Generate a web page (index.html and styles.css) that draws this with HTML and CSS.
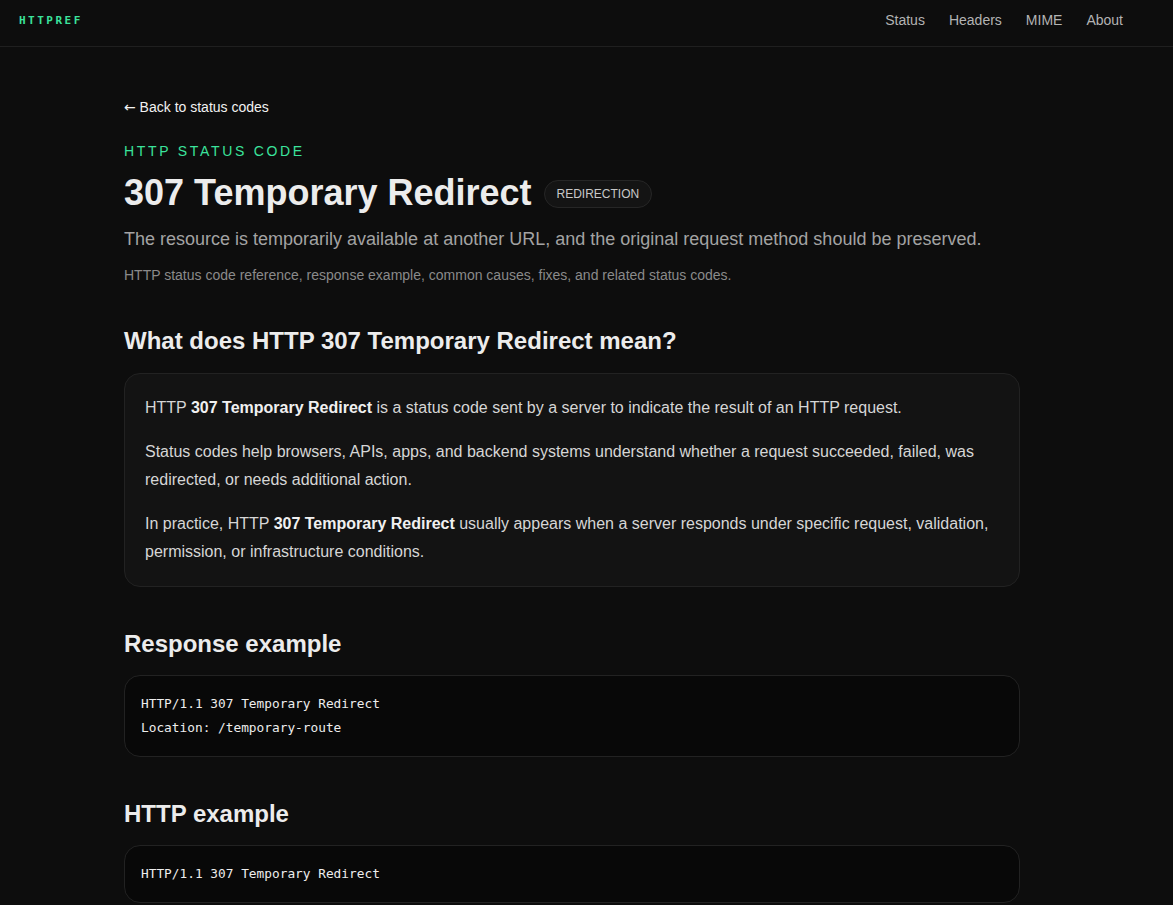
FILE: index.html
```html
<!DOCTYPE html>
<html lang="en">
<head>
<meta charset="utf-8">
<title>307 Temporary Redirect</title>
<link rel="stylesheet" href="styles.css">
</head>
<body>
<header class="topbar">
  <a class="logo" href="#">HTTPREF</a>
  <nav class="nav">
    <a href="#">Status</a>
    <a href="#">Headers</a>
    <a href="#">MIME</a>
    <a href="#">About</a>
  </nav>
</header>
<main class="main">
  <a class="back" href="#"><span class="arrow">←</span> Back to status codes</a>
  <div class="eyebrow">HTTP STATUS CODE</div>
  <div class="title-row">
    <h1 class="title">307 Temporary Redirect</h1>
    <span class="badge">REDIRECTION</span>
  </div>
  <p class="lead">The resource is temporarily available at another URL, and the original request method should be preserved.</p>
  <p class="meta">HTTP status code reference, response example, common causes, fixes, and related status codes.</p>

  <h2 class="section-title first">What does HTTP 307 Temporary Redirect mean?</h2>
  <div class="card">
    <p>HTTP <strong>307 Temporary Redirect</strong> is a status code sent by a server to indicate the result of an HTTP request.</p>
    <p>Status codes help browsers, APIs, apps, and backend systems understand whether a request succeeded, failed, was redirected, or needs additional action.</p>
    <p>In practice, HTTP <strong>307 Temporary Redirect</strong> usually appears when a server responds under specific request, validation, permission, or infrastructure conditions.</p>
  </div>

  <h2 class="section-title">Response example</h2>
  <pre class="code">HTTP/1.1 307 Temporary Redirect
Location: /temporary-route</pre>

  <h2 class="section-title">HTTP example</h2>
  <pre class="code">HTTP/1.1 307 Temporary Redirect</pre>
</main>
</body>
</html>
```
FILE: styles.css
```css
* { box-sizing: border-box; }
html, body { margin: 0; padding: 0; }
body {
  background: #0d0d0d;
  color: #e8e8e8;
  font-family: "Liberation Sans", Arial, sans-serif;
}
a { text-decoration: none; color: inherit; }

.topbar {
  height: 47px;
  border-bottom: 1px solid #1f1f1f;
  display: flex;
  align-items: center;
  justify-content: space-between;
  padding: 0 50px 0 19px;
}
.logo {
  font-family: "DejaVu Sans Mono", monospace;
  font-weight: bold;
  font-size: 11px;
  letter-spacing: 2.5px;
  color: #3be39c;
  margin-top: -5px;
}
.nav {
  display: flex;
  gap: 24px;
  font-size: 14px;
  margin-top: -6px;
}
.nav a { color: #b3b3b3; }

.main {
  width: 896px;
  margin-left: 124px;
  padding: 51px 0 40px;
}
.back {
  display: block;
  font-size: 14px;
  color: #f2f2f2;
  line-height: 18px;
}
.arrow {
  font-family: "DejaVu Sans", sans-serif;
  font-size: 14px;
}
.eyebrow {
  margin-top: 26px;
  font-size: 14px;
  letter-spacing: 2.7px;
  color: #3be39c;
  line-height: 18px;
}
.title-row {
  display: flex;
  align-items: center;
  gap: 12px;
  margin-top: 12px;
}
.title {
  margin: 0;
  font-size: 36px;
  font-weight: bold;
  line-height: 42px;
  color: #ececec;
}
.badge {
  font-size: 12px;
  color: #c8c8c8;
  background: #141414;
  border: 1px solid #262626;
  border-radius: 999px;
  padding: 6px 12px;
  line-height: 14px;
  margin-top: 1px;
}
.lead {
  margin: 12px 0 0;
  font-size: 18px;
  line-height: 26px;
  color: #a3a3a3;
}
.meta {
  margin: 13px 0 0;
  font-size: 14px;
  line-height: 20px;
  color: #8a8a8a;
}
.section-title {
  margin: 41px 0 15px;
  font-size: 24px;
  font-weight: bold;
  line-height: 32px;
  color: #ececec;
}
.section-title.first { margin: 40px 0 16px; }
.card {
  background: #131313;
  border: 1px solid #222;
  border-radius: 16px;
  padding: 20px 20px;
}
.card p {
  margin: 0 0 16px;
  font-size: 16px;
  line-height: 28px;
  color: #d6d6d6;
}
.card p:last-child { margin-bottom: 0; }
.card strong { color: #f0f0f0; }
.code {
  margin: 0;
  background: #080808;
  border: 1px solid #222;
  border-radius: 16px;
  padding: 16px 16px 16px;
  font-family: "DejaVu Sans Mono", monospace;
  font-size: 12.8px;
  line-height: 24px;
  color: #ededed;
}
```
